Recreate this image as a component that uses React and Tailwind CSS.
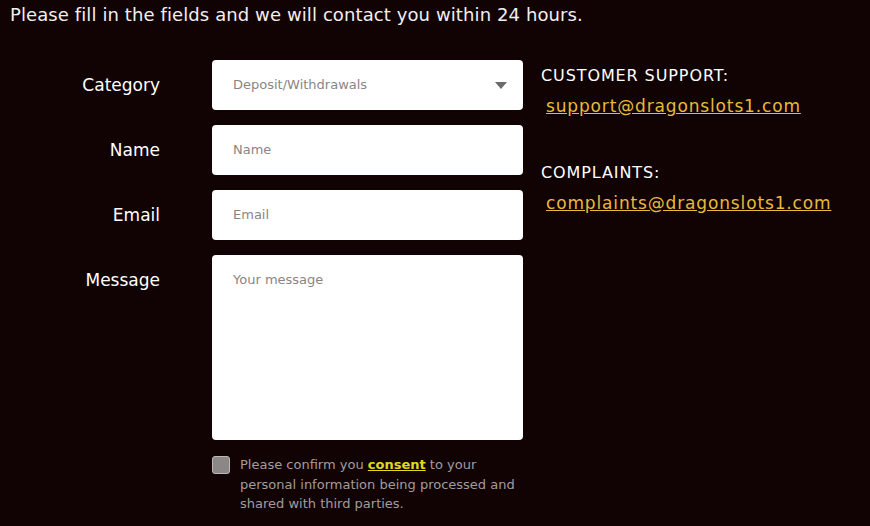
import React from 'react';

const fields = [
  { label: 'Category', kind: 'select', value: 'Deposit/Withdrawals' },
  { label: 'Name', kind: 'input', value: 'Name' },
  { label: 'Email', kind: 'input', value: 'Email' },
];

const ContactPage = () => {
  return (
    <div className="min-h-[526px] bg-[#110304] text-white font-['DejaVu_Sans',sans-serif] overflow-hidden">
      <p className="pl-[10px] pt-[1px] text-[18px] leading-[28px] text-[#f4eeee] tracking-[0.1px]">
        Please fill in the fields and we will contact you within 24 hours.
      </p>

      <div className="flex mt-[31px]">
        <div className="grid grid-cols-[160px_311px] gap-x-[52px] gap-y-[15px]">
          {fields.map((f) => (
            <React.Fragment key={f.label}>
              <div className="h-[50px] pt-[2px] flex items-center justify-end text-[17px]">{f.label}</div>
              <div className="h-[50px] bg-white rounded-[4px] flex items-center justify-between pl-[21px] pr-[16px] text-[13px] text-[#8a8585]">
                <span>{f.value}</span>
                {f.kind === 'select' && (
                  <svg width="12" height="7" viewBox="0 0 12 7">
                    <path d="M0 0h12L6 7z" fill="#6b6b6b" />
                  </svg>
                )}
              </div>
            </React.Fragment>
          ))}

          <div className="h-[50px] pt-[2px] flex items-center justify-end text-[17px]">Message</div>
          <div className="h-[185px] bg-white rounded-[4px] pl-[21px] pt-[15px] text-[13px] text-[#8a8585]">
            Your message
          </div>

          <div />
          <div className="flex gap-[10px] text-[13px] leading-[19.5px] text-[#a39c9c]">
            <div className="mt-[1px] w-[18px] h-[18px] shrink-0 rounded-[3px] bg-[#8c8787] border border-[#bdb8b8]" />
            <p>
              Please confirm you{' '}
              <span className="font-bold text-[#e3d91f] underline">consent</span> to your personal
              information being processed and shared with third parties.
            </p>
          </div>
        </div>

        <div className="ml-[18px] pt-[4px]">
          <h3 className="text-[16px] leading-[24px] uppercase tracking-[0.9px]">Customer support:</h3>
          <a className="block ml-[5px] mt-[6px] text-[17px] leading-[24px] tracking-[0.85px] text-[#e8b93b] underline">
            support@dragonslots1.com
          </a>
          <h3 className="mt-[43px] text-[16px] leading-[24px] uppercase tracking-[0.9px]">Complaints:</h3>
          <a className="block ml-[5px] mt-[6px] text-[17px] leading-[24px] tracking-[0.85px] text-[#e8b93b] underline">
            complaints@dragonslots1.com
          </a>
        </div>
      </div>
    </div>
  );
};

export default ContactPage;
